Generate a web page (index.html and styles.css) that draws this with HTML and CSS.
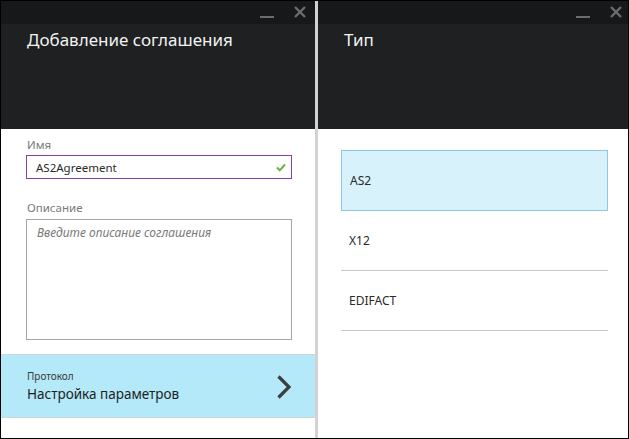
FILE: index.html
```html
<!DOCTYPE html>
<html lang="ru">
<head>
<meta charset="utf-8">
<link rel="stylesheet" href="styles.css">
</head>
<body>
<div class="frame">
  <section class="blade blade-left">
    <header class="blade-head">
      <div class="controls">
        <span class="ctl-min"></span>
        <svg class="ctl-close" width="12" height="12" viewBox="0 0 12 12"><path d="M1 1L11 11M11 1L1 11" stroke="#6b6d6f" stroke-width="2.4"/></svg>
      </div>
      <h1 class="blade-title">Добавление соглашения</h1>
    </header>
    <div class="blade-body">
      <div class="form">
        <label class="field-label">Имя</label>
        <div class="input valid">
          <span class="input-text">AS2Agreement</span>
          <svg class="check" width="10" height="9" viewBox="0 0 10 9"><path d="M1 4.5L3.8 7.3L9 1.5" fill="none" stroke="#6cb33e" stroke-width="2"/></svg>
        </div>
        <label class="field-label label-desc">Описание</label>
        <div class="textarea"><span class="placeholder">Введите описание соглашения</span></div>
      </div>
      <div class="nav-item">
        <div class="nav-text">
          <div class="nav-sub">Протокол</div>
          <div class="nav-main">Настройка параметров</div>
        </div>
        <svg class="chevron" width="16" height="26" viewBox="0 0 16 26"><path d="M2.5 2.5L13 13L2.5 23.5" fill="none" stroke="#3b3d3f" stroke-width="3.2"/></svg>
      </div>
    </div>
  </section>
  <div class="divider"></div>
  <section class="blade blade-right">
    <header class="blade-head">
      <div class="controls">
        <span class="ctl-min"></span>
        <svg class="ctl-close" width="12" height="12" viewBox="0 0 12 12"><path d="M1 1L11 11M11 1L1 11" stroke="#6b6d6f" stroke-width="2.4"/></svg>
      </div>
      <h1 class="blade-title">Тип</h1>
    </header>
    <div class="blade-body">
      <ul class="type-list">
        <li class="type-item selected">AS2</li>
        <li class="type-item">X12</li>
        <li class="type-item">EDIFACT</li>
      </ul>
    </div>
  </section>
</div>
</body>
</html>
```
FILE: styles.css
```css
* { box-sizing: border-box; }
html, body { margin: 0; padding: 0; background: #000; }
body { font-family: "Noto Sans", "Open Sans", sans-serif; }
.frame {
  width: 629px;
  height: 439px;
  border: 1px solid #000;
  display: flex;
  background: #fff;
}
.blade { display: flex; flex-direction: column; height: 100%; }
.blade-left { width: 314px; }
.blade-right { width: 310px; }
.divider { width: 3px; background: #d2d2d2; }
.blade-head {
  height: 128px;
  background: #1e2022;
}
.controls {
  height: 23px;
  background: #17181a;
  display: flex;
  justify-content: flex-end;
  align-items: center;
  gap: 20px;
  padding-right: 9px;
}
.blade-right .controls { padding-right: 6px; }
.ctl-min { width: 14px; height: 2px; background: #6b6d6f; margin-top: 9px; }
.ctl-close { margin-top: -2px; }
.blade-title {
  margin: 0;
  padding: 5px 0 0 26px;
  font-weight: 400;
  font-size: 17px;
  color: #f2f2f2;
  line-height: 22px;
}
.blade-body { flex: 1; display: flex; flex-direction: column; }
.form { padding: 8px 23px 0 25px; height: 225px; }
.field-label { display: block; font-size: 11.5px; color: #7a7a7a; line-height: 16px; padding-left: 1px; }
.label-desc { margin-top: 21px; }
.input {
  margin-top: 2px;
  height: 24px;
  border: 1px solid #8c3ea8;
  display: flex;
  align-items: center;
  justify-content: space-between;
  padding: 0 5px 0 9px;
}
.input-text { font-size: 11.5px; color: #2a2a2a; }
.textarea {
  margin-top: 3px;
  height: 121px;
  border: 1px solid #a6a6a6;
  padding: 0 10px;
}
.placeholder { font-size: 12px; font-style: italic; color: #7a7a7a; }
.nav-item {
  height: 64px;
  background: #b3e9f8;
  border-top: 1px solid #cfd6d8;
  border-bottom: 1px solid #cfd6d8;
  display: flex;
  align-items: center;
  justify-content: space-between;
  padding: 0 23px 0 26px;
}
.nav-sub { font-size: 10px; color: #3a3a3a; line-height: 14px; }
.nav-main { font-size: 13.5px; color: #1e1e1e; line-height: 20px; margin-top: 1px; }
.chevron { margin-top: 1px; }
.type-list { list-style: none; margin: 21px 20px 0 23px; padding: 0; }
.type-item {
  height: 60px;
  display: flex;
  align-items: center;
  padding-left: 8px;
  font-size: 12px;
  color: #2a2a2a;
  border-bottom: 1px solid #c8c8c8;
}
.type-item.selected {
  background: #d7f2fb;
  border: 1px solid #8ec6e3;
  height: 61px;
}
```
